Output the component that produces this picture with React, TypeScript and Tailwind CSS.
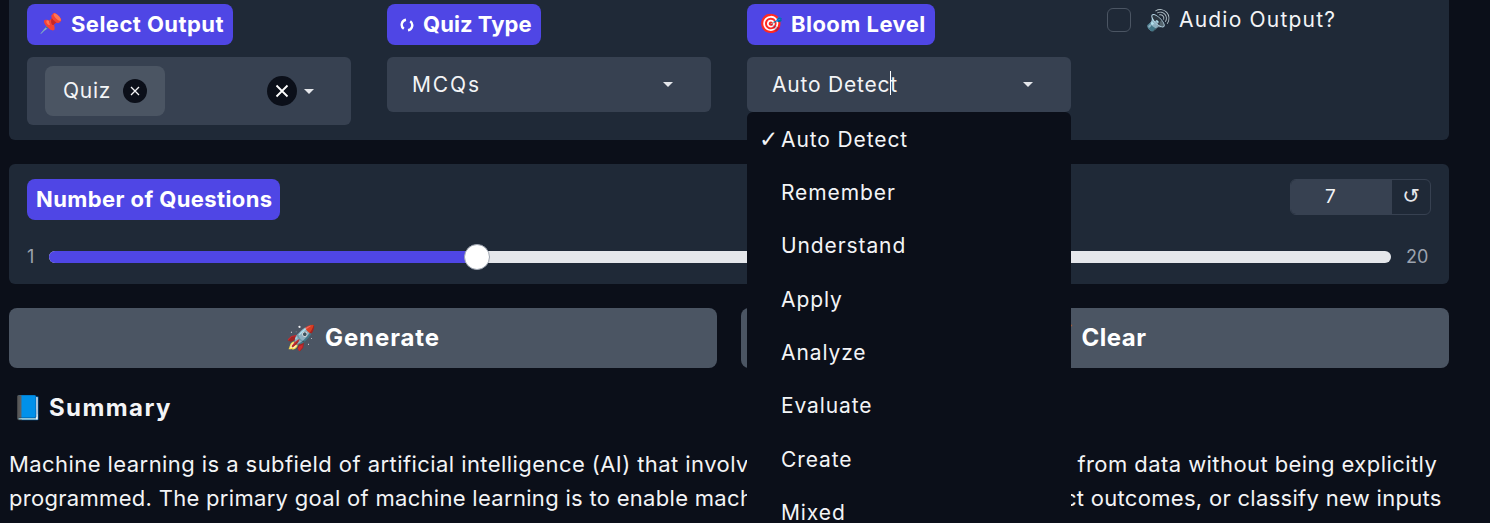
const body = "font-['Inter',sans-serif]";
const heading = "font-['Inter',sans-serif] font-bold";

const bloomLevels = ["Remember", "Understand", "Apply", "Analyze", "Evaluate", "Create", "Mixed"];

function Label({ icon, text, tracking }: { icon: React.ReactNode; text: string; tracking: string }) {
  return (
    <span className={`inline-flex h-[41px] items-center rounded-lg bg-[#4f46e5] pl-3 pr-[9px] text-[22px] text-white ${tracking} ${heading}`}>
      {icon}
      {text}
    </span>
  );
}

function Caret() {
  return <span className="h-0 w-0 border-x-[5px] border-t-[5px] border-x-transparent border-t-[#e5e7eb]" />;
}

function SelectBox({ value, tracking, cursor }: { value: string; tracking: string; cursor?: boolean }) {
  return (
    <div className={`mt-3 flex h-[55px] items-center justify-between rounded-md bg-[#374151] pl-[25px] pr-[38px] text-[21px] text-[#f3f4f6] ${tracking}`}>
      <span className="relative">
        {value}
        {cursor && <span className="absolute left-[118px] top-[2px] h-6 w-px bg-white" />}
      </span>
      <Caret />
    </div>
  );
}

export default function App() {
  return (
    <div className={`relative h-[523px] w-[1490px] overflow-hidden bg-[#0b0f19] pl-[9px] pr-[41px] ${body}`}>
      {/* Top panel */}
      <div className="grid h-[140px] grid-cols-4 gap-9 rounded-b-md bg-[#1f2937] px-[18px] pt-1">
        <div>
          <Label
            icon={<span className="mr-2 w-6 text-[19px] tracking-normal">📌</span>}
            text="Select Output"
            tracking="tracking-[0.45px]"
          />
          <div className="mt-3 flex h-[68px] items-center justify-between rounded-md bg-[#374151] pl-[18px] pr-[37px]">
            <span className="flex h-[50px] w-[120px] items-center gap-3 rounded-lg bg-[#4b5563] pl-[18px] text-[21px] tracking-[0.7px] text-[#f3f4f6]">
              Quiz
              <span className="flex h-6 w-6 items-center justify-center rounded-full bg-[#0b0f19] text-[#f3f4f6]">
                <svg viewBox="0 0 12 12" className="h-3 w-3" fill="none" stroke="currentColor" strokeWidth="1.3">
                  <path d="M2 2l8 8M10 2l-8 8" />
                </svg>
              </span>
            </span>
            <span className="flex items-center gap-[7px]">
              <span className="flex h-[30px] w-[30px] items-center justify-center rounded-full bg-[#0b0f19] text-white">
                <svg viewBox="0 0 14 14" className="h-[14px] w-[14px]" fill="none" stroke="currentColor" strokeWidth="1.8">
                  <path d="M1.5 1.5l11 11M12.5 1.5l-11 11" />
                </svg>
              </span>
              <Caret />
            </span>
          </div>
        </div>

        <div>
          <Label
            icon={
              <svg viewBox="0 0 14 14" className="ml-px mr-[9px] h-[14px] w-[14px]" fill="none" stroke="white" strokeWidth="2.4">
                <path d="M6 1.8A5 5 0 0 0 3.8 10.8M8 12.2A5 5 0 0 0 10.2 3.2" />
              </svg>
            }
            text="Quiz Type"
            tracking="tracking-[0.05px]"
          />
          <SelectBox value="MCQs" tracking="tracking-[1.9px]" />
        </div>

        <div>
          <Label
            icon={<span className="mr-2 w-6 text-[19px] tracking-normal">🎯</span>}
            text="Bloom Level"
            tracking="tracking-[0.45px]"
          />
          <SelectBox value="Auto Detect" tracking="tracking-[0.8px]" cursor />
        </div>

        <label className="flex h-[32px] items-center gap-[15px] text-[21px] tracking-[1.2px] text-[#f3f4f6]">
          <span className="h-6 w-6 rounded-md border border-[#4b5563] bg-[#1f2937]" />
          <span>
            <span className="mr-2 text-[20px] tracking-normal">🔊</span>Audio Output?
          </span>
        </label>
      </div>

      {/* Slider panel */}
      <div className="mt-6 h-[120px] rounded-md bg-[#1f2937] px-[18px] pt-[15px]">
        <div className="flex items-start justify-between">
          <span className={`inline-flex h-[41px] items-center rounded-lg bg-[#4f46e5] pl-[9px] pr-2 text-[22px] tracking-[0.4px] text-white ${heading}`}>
            Number of Questions
          </span>
          <div className="flex h-9 w-[141px] overflow-hidden rounded-md border border-[#374151]">
            <span className="flex w-[101px] items-center justify-center bg-[#374151] pr-[22px] text-[19px] text-[#f3f4f6]">7</span>
            <span className="flex flex-1 items-center justify-center font-['DejaVu_Sans',sans-serif] text-[21px] text-[#e5e7eb]">↺</span>
          </div>
        </div>
        <div className="mt-[23px] flex items-center gap-[17px] text-[18px] text-[#9ca3af]">
          <span className="w-[5px]">1</span>
          <div className="relative h-3 flex-1 rounded-full bg-[#e5e7eb]">
            <div className="h-3 w-[428px] rounded-full bg-[#4f46e5]" />
            <span className="absolute left-[415px] top-[-7px] h-[26px] w-[26px] rounded-full border border-[#9ca3af] bg-white" />
          </div>
          <span className="-ml-[2px] w-[25px]">20</span>
        </div>
      </div>

      {/* Buttons */}
      <div className="mt-6 grid grid-cols-2 gap-6">
        <button className={`flex h-[60px] items-center justify-center gap-[9px] rounded-lg bg-[#4b5563] text-[24px] tracking-[0.9px] text-white ${heading}`}>
          <span className="tracking-normal">🚀</span>Generate
        </button>
        <button className={`flex h-[60px] items-center justify-center gap-2 rounded-lg bg-[#4b5563] text-[24px] tracking-[0.5px] text-white ${heading}`}>
          <span className="tracking-normal">🧹</span>Clear
        </button>
      </div>

      {/* Summary */}
      <h2 className={`mt-6 flex h-[32px] items-center gap-[6px] pl-1 text-[24px] tracking-[1.4px] text-[#f3f4f6] ${heading}`}>
        <span className="tracking-normal">📘</span>Summary
      </h2>
      <p className="mt-[23px] whitespace-nowrap text-[22px] leading-[34px] text-[#f3f4f6]">
        <span className="tracking-[0.43px]">
          Machine learning is a subfield of artificial intelligence (AI) that involves training algorithms to learn from data without being explicitly
        </span>
        <br />
        <span className="tracking-[0.3px]">
          programmed. The primary goal of machine learning is to enable machines to make decisions, predict outcomes, or classify new inputs
        </span>
      </p>

      {/* Open Bloom Level dropdown */}
      <ul className="absolute left-[747px] top-[112px] w-[324px] rounded-md bg-[#0b0f19] pt-px text-[21px] tracking-[0.9px] text-[#f3f4f6]">
        <li className="flex h-[53.3px] items-center">
          <span className="w-[34px] pl-3 font-['DejaVu_Sans',sans-serif] text-[23px] tracking-normal">✓</span>Auto Detect
        </li>
        {bloomLevels.map((level) => (
          <li key={level} className="flex h-[53.3px] items-center pl-[34px]">
            {level}
          </li>
        ))}
      </ul>
    </div>
  );
}
